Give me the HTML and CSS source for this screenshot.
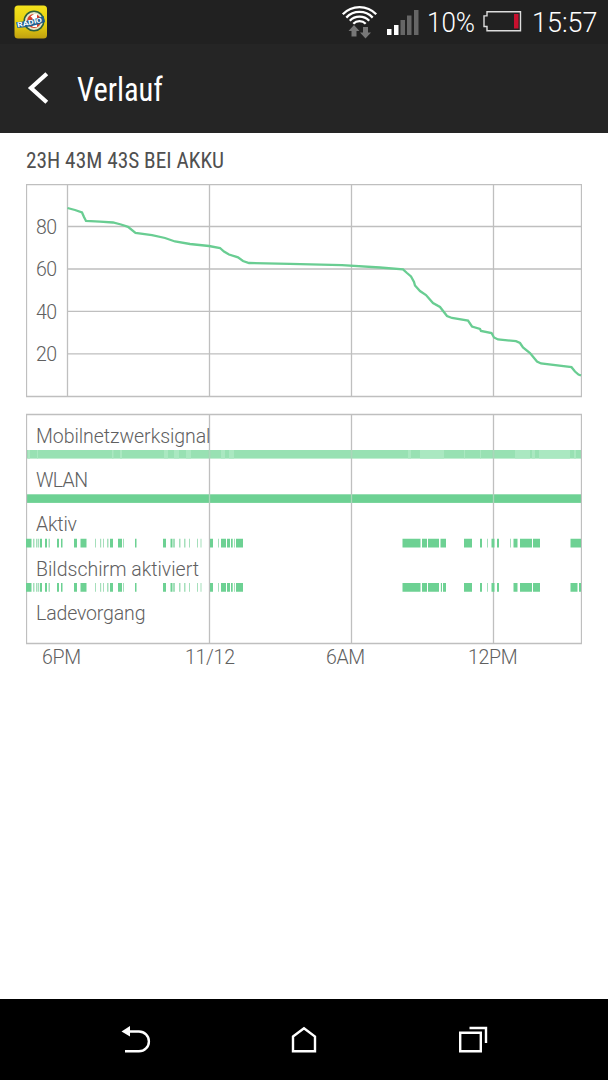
FILE: index.html
```html
<!DOCTYPE html>
<html lang="de">
<head>
    <meta charset="UTF-8">
    <title>Verlauf</title>
    <link rel="stylesheet" href="styles.css">
</head>
<body>
<div class="phone">
    <div class="status_bar">
        <svg class="radio_icon" width="34" height="34" viewBox="0 0 34 34">
            <defs>
                <linearGradient id="gold" x1="0" y1="0" x2="0" y2="1">
                    <stop offset="0" stop-color="#f3e21c"/>
                    <stop offset="0.6" stop-color="#e4cc10"/>
                    <stop offset="1" stop-color="#c0a010"/>
                </linearGradient>
            </defs>
            <rect x="0.5" y="0.5" width="32.500" height="33" rx="3.5" fill="url(#gold)"/>
            <circle cx="20" cy="16" r="9.8" fill="#e9e6c8" stroke="#2b5f3c" stroke-width="1.6"/>
            <circle cx="20" cy="16" r="7" fill="#d8402c"/>
            <path d="M16.500 11.500l3.500-2.500h3v13h-4.500v-9z" fill="#fff"/>
            <path d="M2 17.200Q16 16.500 29.500 11L31 17Q19 22 3.500 23z" fill="#1c5f92"/>
            <text class="radio_text" x="3.800" y="22.300" transform="rotate(-12 4 22)" textLength="25" lengthAdjust="spacingAndGlyphs">RADIO</text>
        </svg>
        <svg class="status_icons" width="270" height="44" viewBox="338 0 270 44">
            <g fill="none" stroke="#fff" stroke-width="2.300">
                <path d="M342.800 14.300A23 23 0 0 1 376.200 14.300"/>
                <path d="M346.300 17.600A18.300 18.300 0 0 1 372.700 17.600"/>
                <path d="M349.800 20.700A13.500 13.500 0 0 1 369.200 20.700"/>
                <path d="M353.300 23.700A8.700 8.700 0 0 1 365.700 23.700"/>
            </g>
            <path d="M354 25l5.500 6h-3v5.500h-5v-5.500h-3zM365.500 38.500l-5.500-6h3v-5.500h5v5.500h3z" fill="#777"/>
            <path d="M387 29h4.500v6h-4.500zM394 25h4.500v10h-4.500z" fill="#fff"/>
            <path d="M400.500 20h4.500v15h-4.500zM407 15.500h4.500v19.500h-4.500zM414 10h4.500v25h-4.500z" fill="#666"/>
            <text x="427" y="31.500" textLength="48" lengthAdjust="spacingAndGlyphs">10%</text>
            <path d="M487 11.700h33.500v19h-33.500v-4.200h-3v-10.600h3z" fill="none" stroke="#ddd" stroke-width="1.400"/>
            <rect x="514" y="14" width="4.500" height="14.500" fill="#c8102e"/>
            <text x="532" y="31.500" textLength="65.500" lengthAdjust="spacingAndGlyphs">15:57</text>
        </svg>
    </div>
    <div class="header">
        <svg class="back_icon" width="24" height="34" viewBox="0 0 24 34">
            <path d="M21.800 1.700L6 16L21.800 30.300" fill="none" stroke="#fff" stroke-width="4.200"/>
        </svg>
        <svg class="title" width="100" height="46">
            <text x="0" y="34.500" textLength="86" lengthAdjust="spacingAndGlyphs">Verlauf</text>
        </svg>
    </div>
    <div class="content">
        <svg class="subtitle" width="556" height="50">
            <text x="0" y="33.500" textLength="198" lengthAdjust="spacingAndGlyphs">23H 43M 43S BEI AKKU</text>
        </svg>
        <svg class="level_chart" width="556" height="214" viewBox="26 184 556 214">
            <path class="grid" d="M26.500 184.500H581.500V396.500H26.500zM67.500 184V396M209.500 184V396M351.500 184V396M493.500 184V396"/>
            <path class="grid" d="M67 226.500H581M67 269H581M67 311.300H581M67 353.800H581"/>
            <text x="36" y="233.500" textLength="21">80</text>
            <text x="36" y="276" textLength="21">60</text>
            <text x="36" y="318.500" textLength="21">40</text>
            <text x="36" y="361" textLength="21">20</text>
            <polyline class="level" points="67.500,208 75,210 82,212.500 84,217 86,221 100,221.700 113,222.500 121,224.500 128,226.800 135.500,233 152,235.200 165,238 175,241.500 190,244 209,246 220,248 224,251.500 229,254.500 238,257.300 243,261 249,263 290,263.900 342,265.200 380,267.500 403,269.300 407,273 411,276.500 414,282 415,285.500 420,291 426,295 433,303 440,307 447,316 452,318 468,320.500 472,326.500 480,329 481,331 491.500,333 494,337.500 498,339.500 516,341.200 520,343 523,347.500 530,353 537,361.500 541,363.500 571.500,367.200 575,371.500 578.500,374.500 581,375.500"/>
        </svg>
        <svg class="state_chart" width="556" height="266" viewBox="26 410 556 266">
            <rect class="signal" x="26" y="450" width="555" height="8.600"/>
            <path class="signal_weak" d="M28 450h2v8.600h-2zM37 450h1v8.600h-1zM112 450h1.500v8.600h-1.500zM120 450h2v8.600h-2zM164 450h4v8.600h-4zM174 450h5v8.600h-5zM186 450h5v8.600h-5zM221 450h4v8.600h-4zM229 450h5v8.600h-5zM408 450h3v8.600h-3zM420 450h24v8.600h-24zM464 450h1v8.600h-1zM480 450h1v8.600h-1zM515 450h15v8.600h-15zM532 450h3v8.600h-3zM539 450h31v8.600h-31zM574 450h2v8.600h-2z"/>
            <rect class="on" x="26" y="494.300" width="555" height="8.600"/>
            <path class="grid" d="M26.500 414.500H581.500V643.500H26.500zM209.500 414V643M351.500 414V643M493.500 414V643"/>
            <path class="grid_light" d="M209.500 450v8.600M209.500 494.300v8.600M351.500 450v8.600M351.500 494.300v8.600M493.500 450v8.600M493.500 494.300v8.600"/>
            <g id="active">
                <path class="on" d="M26 538.800h5.500v8.600h-5.500zM40 538.800h2v8.600h-2zM45 538.800h2v8.600h-2zM57 538.800h2v8.600h-2zM61 538.800h1.500v8.600h-1.500zM74 538.800h3v8.600h-3zM80.500 538.800h6v8.600h-6zM110 538.800h3v8.600h-3zM118 538.800h4v8.600h-4zM135 538.800h1.500v8.600h-1.500zM163 538.800h3v8.600h-3zM170.500 538.800h2v8.600h-2zM210 538.800h3v8.600h-3zM221 538.800h5v8.600h-5zM227 538.800h3v8.600h-3zM231 538.800h1.700v8.600h-1.700zM236 538.800h7v8.600h-7z"/>
                <path class="on" d="M402.500 538.800h18v8.600h-18zM422 538.800h5v8.600h-5zM428 538.800h11v8.600h-11zM440.500 538.800h5.500v8.600h-5.500zM464 538.800h8v8.600h-8zM480 538.800h2v8.600h-2zM491.500 538.800h3v8.600h-3zM497 538.800h2v8.600h-2zM513.500 538.800h4v8.600h-4zM520 538.800h12v8.600h-12zM533 538.800h7v8.600h-7zM570.500 538.800h10.500v8.600h-10.500z"/>
                <path class="on_short" d="M33 538.800h1.500v8.600h-1.500zM36 538.800h1.500v8.600h-1.500zM38 538.800h1.200v8.600h-1.200zM48.500 538.800h1.500v8.600h-1.500zM95 538.800h1v8.600h-1zM100 538.800h1.200v8.600h-1.200zM103 538.800h1v8.600h-1zM107 538.800h1.500v8.600h-1.500zM123 538.800h1v8.600h-1zM173 538.800h2v8.600h-2zM179 538.800h1.500v8.600h-1.500zM184 538.800h1.500v8.600h-1.500zM189 538.800h1v8.600h-1zM197 538.800h1v8.600h-1zM200.500 538.800h1v8.600h-1zM218 538.800h1v8.600h-1zM234 538.800h1v8.600h-1zM487 538.800h1v8.600h-1zM510 538.800h1v8.600h-1z"/>
            </g>
            <!-- screen on follows the active states -->
            <use href="#active" y="44.300"/>
            <path fill="#fff" d="M439.200 583h1.500v9h-1.500zM442 583h1v9h-1zM577.500 583h1.500v9h-1.500zM509 583h3v9h-3z"/>
            <text x="36" y="442.500" textLength="174.500">Mobilnetzwerksignal</text>
            <text x="36" y="487" textLength="52">WLAN</text>
            <text x="36" y="531" textLength="41">Aktiv</text>
            <text x="36" y="575.500" textLength="163">Bildschirm aktiviert</text>
            <text x="36" y="620" textLength="109.500">Ladevorgang</text>
            <text x="42" y="664" textLength="39">6PM</text>
            <text x="185" y="664" textLength="50">11/12</text>
            <text x="326" y="664" textLength="39">6AM</text>
            <text x="468" y="664" textLength="49.500">12PM</text>
        </svg>
    </div>
    <div class="nav_bar">
        <svg width="36" height="36" viewBox="118 1022 36 36">
            <path d="M121.500 1031.500l8.500-5.500v10.500z" fill="#fff"/>
            <path d="M128 1031.500h11a9.900 9.900 0 0 1 0 19.800h-14" fill="none" stroke="#fff" stroke-width="2.400"/>
        </svg>
        <svg width="36" height="36" viewBox="287 1022 36 36">
            <path d="M293 1036.500L304 1028.300L315 1036.500V1051.300H293z" fill="none" stroke="#fff" stroke-width="2.400"/>
        </svg>
        <svg width="36" height="36" viewBox="455 1022 36 36">
            <path d="M460.200 1032.700h20.600v18.600h-20.600zM469.500 1028h16.500v15" fill="none" stroke="#fff" stroke-width="2.400"/>
        </svg>
    </div>
</div>
</body>
</html>
```
FILE: styles.css
```css
body{
    margin: 0;
    font-family: Roboto, "Liberation Sans", sans-serif;
    background-color: white;
}
svg{
    display: block;
}
.phone{
    width: 608px;
    height: 1080px;
    display: flex;
    flex-direction: column;
}
.status_bar{
    box-sizing: border-box;
    height: 44px;
    padding-left: 14px;
    display: flex;
    align-items: center;
    justify-content: space-between;
    background-color: #212121;
}
.status_icons text{
    font-size: 28.5px;
    font-weight: 350;
    fill: white;
}
.radio_text{
    font-size: 6.5px;
    font-weight: bold;
    fill: white;
}
.header{
    box-sizing: border-box;
    height: 89px;
    padding-left: 25px;
    display: flex;
    align-items: center;
    gap: 28px;
    background-color: #252525;
}
.title text{
    font-family: "Roboto Condensed", Roboto, sans-serif;
    font-size: 33px;
    fill: white;
}
.content{
    box-sizing: border-box;
    flex: 1;
    padding: 1px 26px 0;
}
.subtitle text{
    font-family: "Roboto Condensed", Roboto, sans-serif;
    font-size: 22.5px;
    fill: #505050;
}
.level_chart text, .state_chart text{
    font-size: 19.5px;
    font-weight: 300;
    fill: #606060;
}
.state_chart{
    margin-top: 12px;
}
.grid{
    fill: none;
    stroke: #bfbfbf;
    stroke-width: 1.3px;
}
.grid_light{
    stroke: #a9d8ba;
}
.level{
    fill: none;
    stroke: #69cd92;
    stroke-width: 2.3px;
}
.signal{
    fill: #98e1b3;
}
.signal_weak{
    fill: #aae8c1;
}
.on{
    fill: #6dd193;
}
.on_short{
    fill: #a5dfbb;
}
.nav_bar{
    box-sizing: border-box;
    height: 81px;
    padding: 0 117px 0 118px;
    display: flex;
    align-items: center;
    justify-content: space-between;
    background-color: black;
}
```
